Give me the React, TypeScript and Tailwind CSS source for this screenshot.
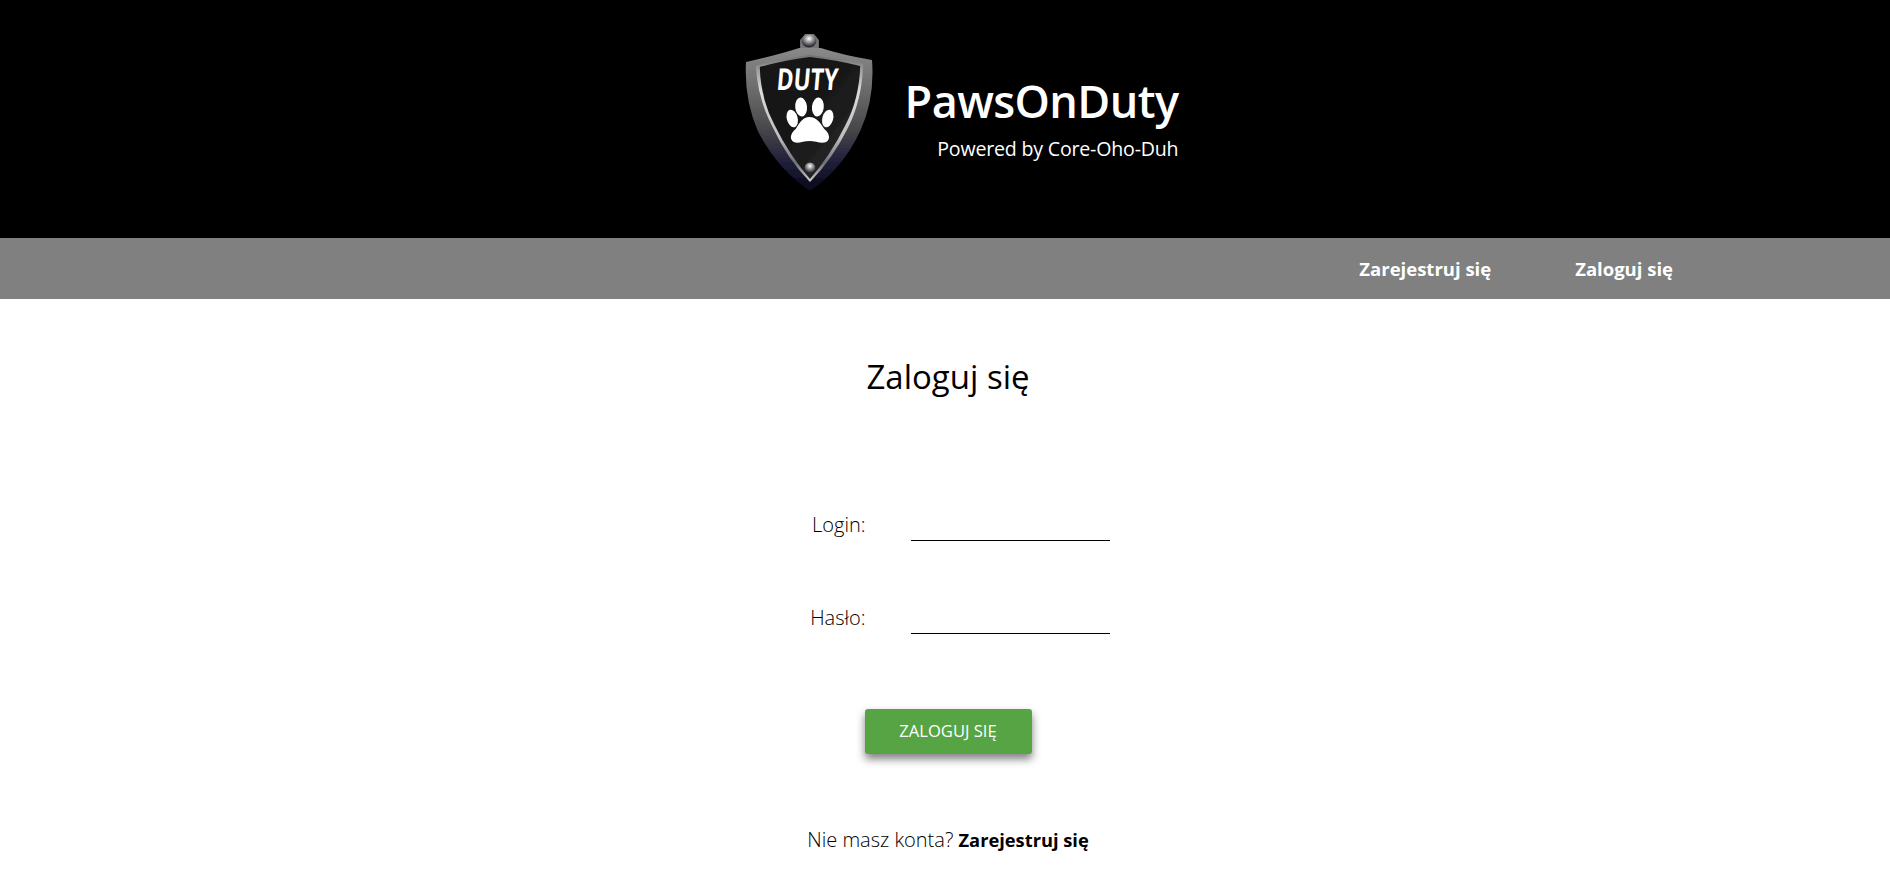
import React from 'react'

function ShieldLogo() {
  return (
    <svg width="130" height="162" viewBox="0 0 132 162" preserveAspectRatio="none" className="block">
      <defs>
        <linearGradient id="rim" x1="0" y1="0" x2="0" y2="1">
          <stop offset="0" stopColor="#8a8a8a" />
          <stop offset="0.3" stopColor="#6a6a6a" />
          <stop offset="0.55" stopColor="#4a4a4c" />
          <stop offset="0.78" stopColor="#22223c" />
          <stop offset="1" stopColor="#06061a" />
        </linearGradient>
        <linearGradient id="edge" x1="0" y1="0" x2="0" y2="1">
          <stop offset="0" stopColor="#6f6f6f" />
          <stop offset="0.28" stopColor="#dcdcdc" />
          <stop offset="0.65" stopColor="#bdbdbd" />
          <stop offset="0.85" stopColor="#6e6e78" />
          <stop offset="1" stopColor="#d0d0d0" />
        </linearGradient>
        <linearGradient id="plate" x1="0" y1="0" x2="1" y2="1">
          <stop offset="0" stopColor="#111" />
          <stop offset="0.55" stopColor="#1a1a1a" />
          <stop offset="1" stopColor="#2e2e2e" />
        </linearGradient>
        <radialGradient id="bolt" cx="0.5" cy="0.32" r="0.62">
          <stop offset="0" stopColor="#ffffff" />
          <stop offset="0.4" stopColor="#a2a2a2" />
          <stop offset="1" stopColor="#23232e" />
        </radialGradient>
        <filter id="soft" x="-5%" y="-5%" width="110%" height="110%">
          <feGaussianBlur stdDeviation="0.6" />
        </filter>
      </defs>
      <g filter="url(#soft)">
        {/* top bolt */}
        <path d="M57 17 L57 9 L62 3 L71 3 L76 9 L76 17 Z" fill="#77777a" />
        <ellipse cx="66" cy="10" rx="7.5" ry="6.5" fill="url(#bolt)" />
        {/* outer rim */}
        <path d="M2 31 Q34 24 56 17 L78 17 Q100 24 130 29 Q133 68 118 100 Q100 138 67 160 Q34 138 14 100 Q0 68 2 31 Z" fill="url(#rim)" />
        {/* bright inner edge */}
        <path d="M12 35 Q42 27 67 24 Q94 27 121 33 Q120 68 106 96 Q90 128 67 151 Q44 128 29 96 Q14 68 12 35 Z" fill="url(#edge)" />
        {/* plate */}
        <path d="M16 36 Q42 29 67 26 Q94 29 118 35 Q117 68 103 94 Q88 124 67 148 Q46 124 31 94 Q17 68 16 36 Z" fill="url(#plate)" />
      </g>
      <g transform="translate(-1.5 0)">
        <text x="0" y="0" transform="translate(65 59) skewX(-5)" textAnchor="middle" fill="#fff" fontSize="30" fontWeight="700" textLength="62" lengthAdjust="spacingAndGlyphs" style={{ fontFamily: '"Open Sans", sans-serif' }}>DUTY</text>
        {/* paw */}
        <ellipse cx="59.5" cy="76" rx="6" ry="9.5" fill="#fff" transform="rotate(-6 59.5 76)" />
        <ellipse cx="76.5" cy="76" rx="6" ry="9.5" fill="#fff" transform="rotate(6 76.5 76)" />
        <ellipse cx="50.5" cy="87.5" rx="5.5" ry="9" fill="#fff" transform="rotate(-16 50.5 87.5)" />
        <ellipse cx="86.5" cy="87.5" rx="5.5" ry="9" fill="#fff" transform="rotate(16 86.5 87.5)" />
        <path d="M68 86 C75 86 79 92 83 98 C88 102 90 108 85 111 C80 113 74 110 68 110 C62 110 56 113 52 111 C47 108 49 102 54 98 C58 92 61 86 68 86 Z" fill="#fff" />
      </g>
      {/* bottom bolt */}
      <circle cx="67" cy="137" r="5.5" fill="url(#bolt)" />
    </svg>
  )
}

function Field({ label }: { label: string }) {
  return (
    <div className="flex items-end h-[40px]">
      <label className="w-[163px] text-right text-[20px] leading-[28px] font-light text-black pb-[2px]">{label}</label>
      <div className="ml-[45px] w-[199px] h-[40px] border-b-[1px] border-black"></div>
    </div>
  )
}

export default function App() {
  return (
    <div className="h-[877px] overflow-hidden bg-white font-['Open_Sans',sans-serif]">
      <header className="h-[238px] bg-black flex justify-center text-white">
        <div className="flex items-start pt-[31px] pl-[32px]">
          <ShieldLogo />
          <div className="ml-[31px] mt-[42px] flex flex-col items-end">
            <div className="text-[45px] leading-[56px] font-[650] tracking-[-0.6px]">PawsOnDuty</div>
            <div className="text-[19.6px] leading-[26px] font-normal tracking-[-0.2px] mt-[7px]">Powered by Core-Oho-Duh</div>
          </div>
        </div>
      </header>
      <nav className="h-[61px] pt-[1px] bg-[#808080] flex items-center justify-end pr-[217px] text-white text-[18.5px] font-bold gap-[84px]">
        <a>Zarejestruj się</a>
        <a>Zaloguj się</a>
      </nav>
      <main className="flex flex-col items-center pl-[6px]">
        <h1 className="mt-[55px] text-[33px] leading-[46px] text-black">Zaloguj się</h1>
        <form className="mt-[101px] flex flex-col gap-[53px] mr-[84px]">
          <Field label="Login:" />
          <Field label="Hasło:" />
        </form>
        <button className="mt-[75px] w-[167px] h-[45px] rounded-[3px] bg-[#57a445] text-white text-[16.6px] shadow-[0_5px_9px_rgba(0,0,0,0.5)]">ZALOGUJ SIĘ</button>
        <p className="mt-[72px] text-[20px] font-light text-black leading-[28px]">Nie masz konta? <span className="font-bold text-[18.3px]">Zarejestruj się</span></p>
      </main>
    </div>
  )
}
